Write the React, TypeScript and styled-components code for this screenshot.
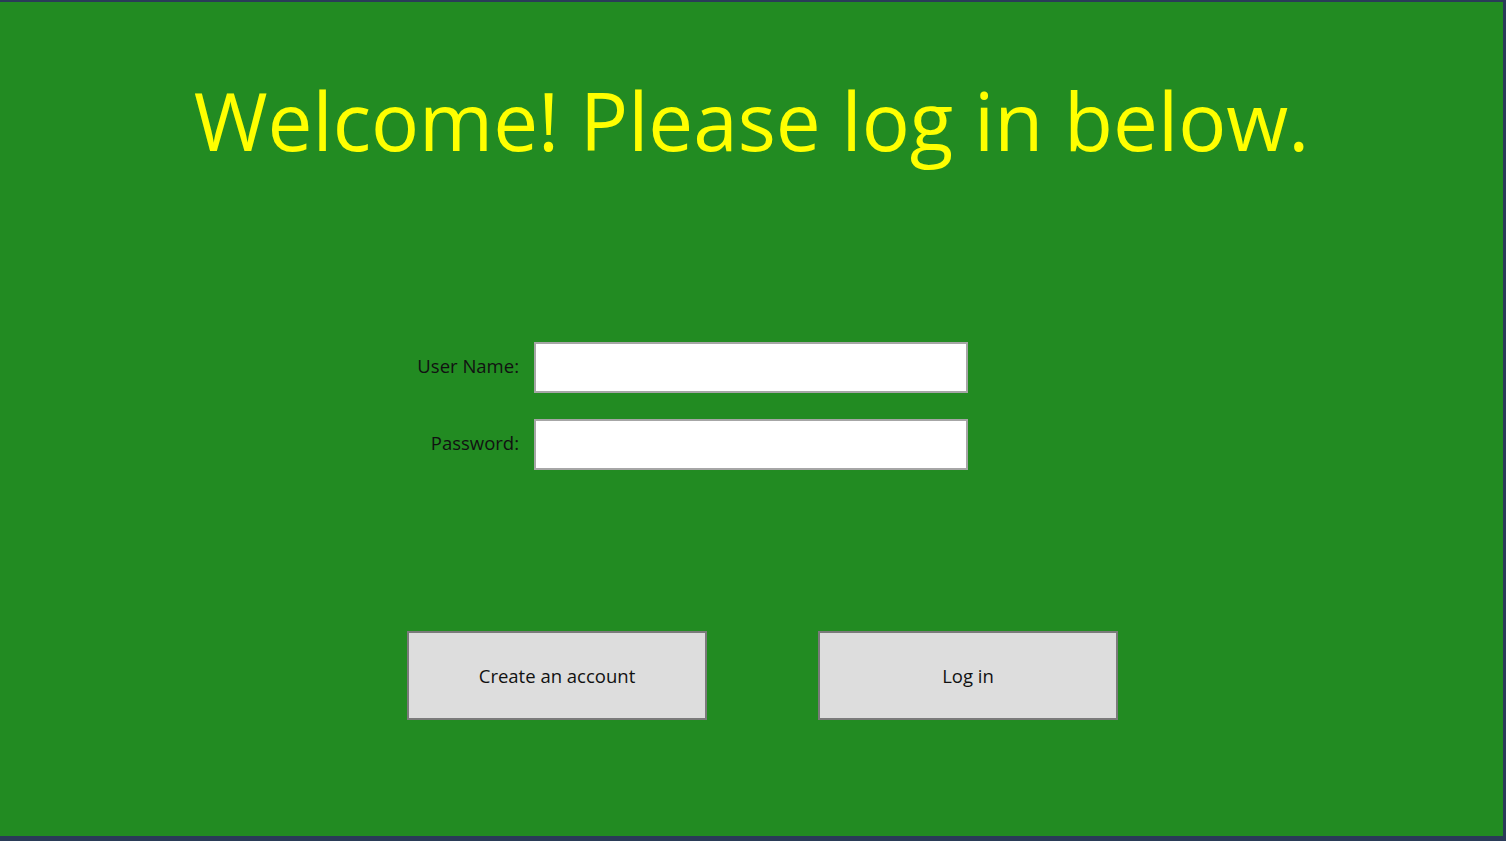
import styled, { createGlobalStyle } from "styled-components";

const GlobalStyle = createGlobalStyle`
  html, body {
    margin: 0;
    padding: 0;
    height: 100%;
    overflow: hidden;
  }
  body {
    font-family: "Open Sans", "Noto Sans", sans-serif;
  }
  #root {
    height: 100%;
  }
`;

const StyledWindow = styled.div`
  box-sizing: border-box;
  height: 841px;
  background-color: #228b22;
  border-top: 2px solid #2a3b58;
  border-right: 3px solid #2a3b58;
  border-bottom: 5px solid #2a3b58;
  display: flex;
  flex-direction: column;
`;

const StyledTitle = styled.h1`
  margin: 68px 0 0;
  text-align: center;
  color: #ffff00;
  font-weight: 400;
  font-size: 80px;
  line-height: 100px;
`;

const StyledForm = styled.div`
  display: grid;
  grid-template-columns: 534px 434px 1fr;
  row-gap: 26px;
  align-items: center;
  margin-top: 172px;
`;

const StyledLabel = styled.label`
  justify-self: end;
  padding: 0 15px 5px 0;
  font-size: 18.5px;
  color: #111;
`;

const StyledInput = styled.input`
  box-sizing: border-box;
  height: 51px;
  width: 100%;
  border: 2px solid #a6a6a6;
  background: #fff;
  outline: none;
  font-size: 17px;
  padding: 0 6px;
`;

const StyledActions = styled.div`
  display: flex;
  gap: 111px;
  padding-left: 407px;
  margin-top: 161px;
`;

const StyledButton = styled.button`
  box-sizing: border-box;
  width: 300px;
  height: 89px;
  background: #dddddd;
  border: 2px solid #7a7a7a;
  font-family: inherit;
  font-size: 18.5px;
  color: #111;
  cursor: pointer;
`;

export default function App() {
  return (
    <>
      <GlobalStyle />
      <StyledWindow>
        <StyledTitle>Welcome! Please log in below.</StyledTitle>

        <StyledForm>
          <StyledLabel htmlFor="username">User Name:</StyledLabel>
          <StyledInput id="username" type="text" />
          <span />
          <StyledLabel htmlFor="password">Password:</StyledLabel>
          <StyledInput id="password" type="password" />
          <span />
        </StyledForm>

        <StyledActions>
          <StyledButton>Create an account</StyledButton>
          <StyledButton>Log in</StyledButton>
        </StyledActions>
      </StyledWindow>
    </>
  );
}
